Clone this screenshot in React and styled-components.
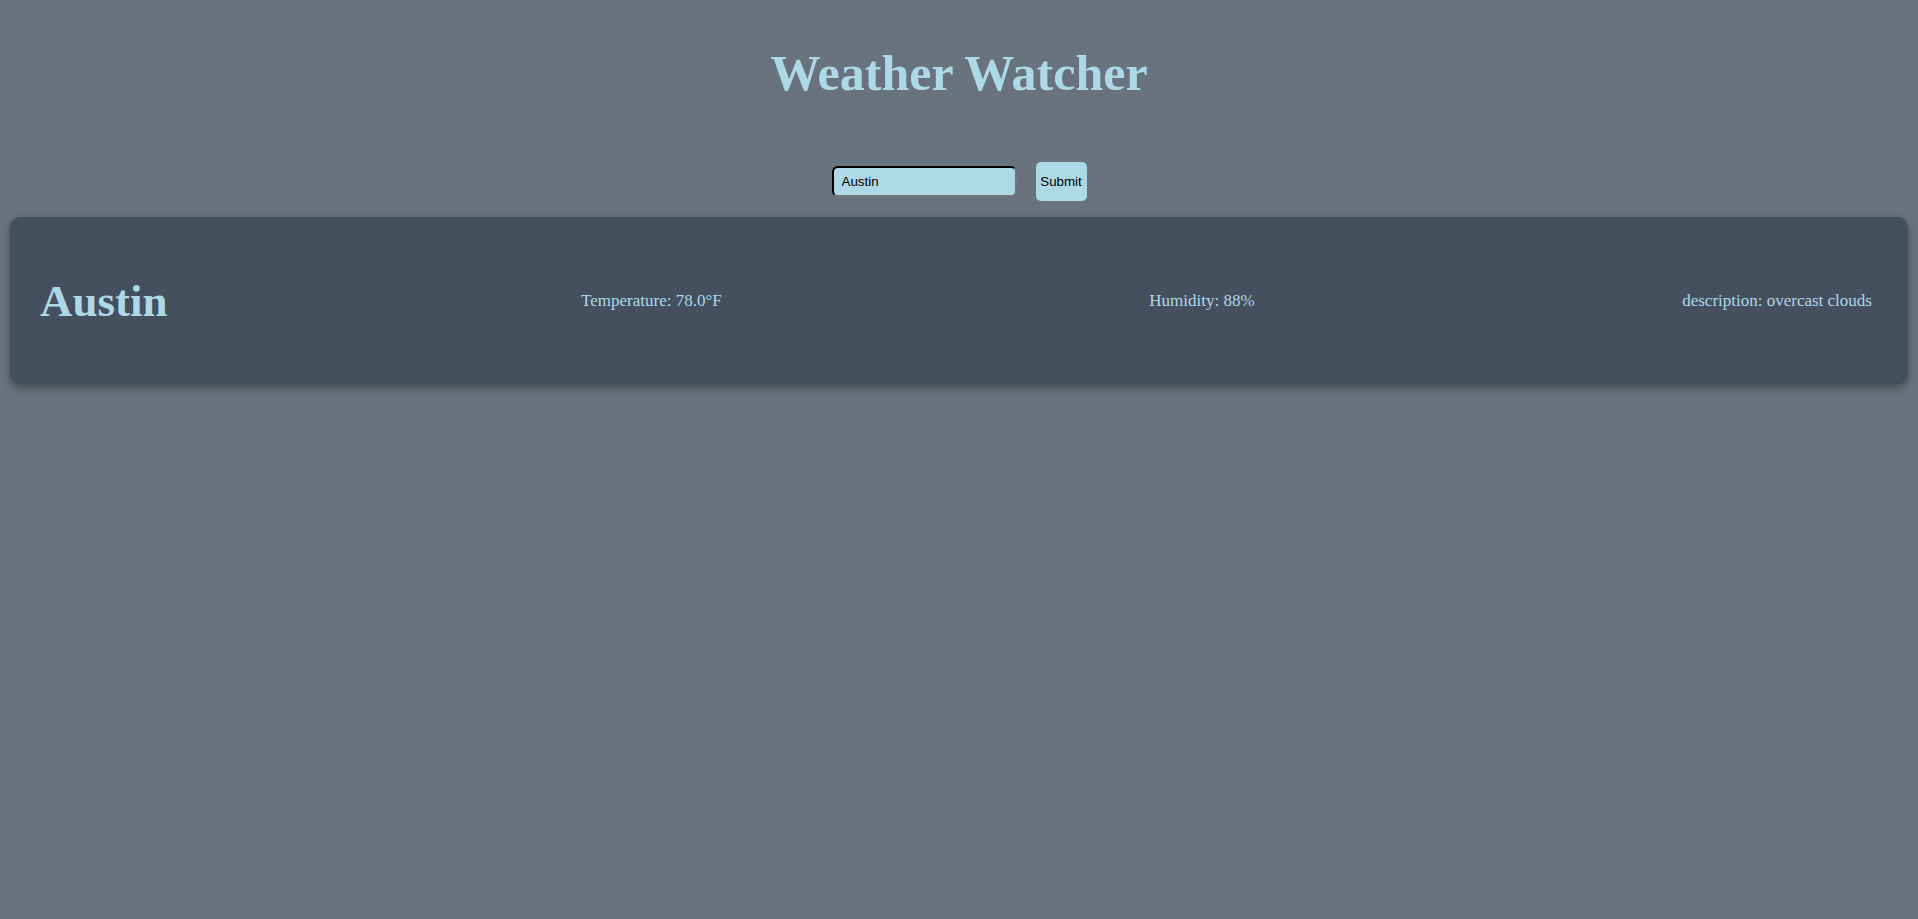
import React, { useState } from "react";
import styled, { createGlobalStyle } from "styled-components";

const GlobalStyle = createGlobalStyle`
  html, body {
    margin: 0;
    background: #69737e;
    min-height: 100%;
  }
  body {
    font-family: "Liberation Serif", "Times New Roman", serif;
    min-height: 919px;
  }
`;

const Page = styled.div`
  display: flex;
  flex-direction: column;
  align-items: stretch;
`;

const Title = styled.h1`
  margin: 0;
  padding-top: 47px;
  font-size: 50px;
  line-height: 53px;
  font-weight: bold;
  text-align: center;
  color: lightblue;
`;

const Form = styled.form`
  display: flex;
  flex-direction: row;
  justify-content: center;
  align-items: center;
  gap: 19px;
  margin-top: 62px;
`;

const Input = styled.input`
  width: 185px;
  height: 31px;
  box-sizing: border-box;
  padding: 0 8px;
  background: lightblue;
  border: 2px inset #2b2b2b;
  border-right-color: #767676;
  border-bottom-color: #767676;
  border-radius: 6px;
  font-family: "Liberation Sans", Arial, sans-serif;
  font-size: 13.33px;
  color: #000;
  outline: none;
`;

const Button = styled.button`
  width: 51px;
  height: 39px;
  padding: 0;
  background: lightblue;
  border: none;
  border-radius: 5px;
  font-family: "Liberation Sans", Arial, sans-serif;
  font-size: 13.33px;
  color: #000;
  cursor: pointer;
`;

const Card = styled.div`
  display: flex;
  flex-direction: row;
  justify-content: space-between;
  align-items: center;
  height: 167px;
  box-sizing: border-box;
  margin: 16px 10px 0;
  padding: 0 36px 0 30px;
  background: #45505f;
  border-radius: 10px;
  box-shadow: 0 4px 10px rgba(0, 0, 0, 0.35);
  color: lightblue;
`;

const City = styled.h2`
  margin: 0 -14px 0 0;
  font-size: 45px;
  font-weight: bold;
`;

const Stat = styled.p`
  margin: 0;
  font-size: 17px;
`;

export default function App() {
  const [city, setCity] = useState("Austin");
  const weather = {
    name: "Austin",
    temp: 78.0,
    humidity: 88,
    description: "overcast clouds",
  };

  return (
    <Page>
      <GlobalStyle />
      <Title>Weather Watcher</Title>
      <Form onSubmit={(e) => e.preventDefault()}>
        <Input value={city} onChange={(e) => setCity(e.target.value)} />
        <Button type="submit">Submit</Button>
      </Form>
      <Card>
        <City>{weather.name}</City>
        <Stat>Temperature: {weather.temp.toFixed(1)}°F</Stat>
        <Stat>Humidity: {weather.humidity}%</Stat>
        <Stat>description: {weather.description}</Stat>
      </Card>
    </Page>
  );
}
